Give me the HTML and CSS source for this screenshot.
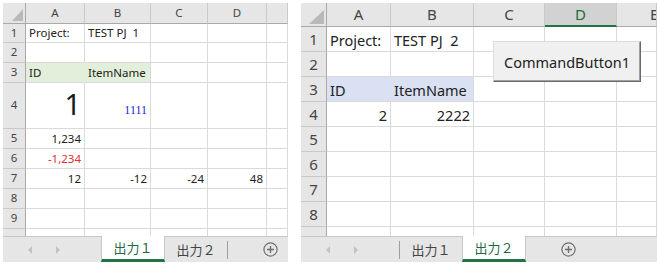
FILE: index.html
```html
<!DOCTYPE html>
<html lang="ja">
<head>
    <meta charset="UTF-8">
    <meta name="viewport" content="width=device-width, initial-scale=1.0">
    <title>Book</title>
    <link rel="stylesheet" href="styles.css">
</head>
<body>
    <div class="book">
        <!-- sheet 出力1 -->
        <div class="pane pane-1">
            <div class="sheet sheet-1">
                <div class="c h corner"><span class="tri"></span></div>
                <div class="c h col-h">A</div>
                <div class="c h col-h">B</div>
                <div class="c h col-h">C</div>
                <div class="c h col-h">D</div>
                <div class="c h col-h"></div>

                <div class="c h row-h">1</div>
                <div class="c">Project:</div>
                <div class="c">TEST PJ&nbsp; 1</div>
                <div class="c"></div><div class="c"></div><div class="c"></div>

                <div class="c h row-h">2</div>
                <div class="c"></div><div class="c"></div><div class="c"></div><div class="c"></div><div class="c"></div>

                <div class="c h row-h">3</div>
                <div class="c fill-green join">ID</div>
                <div class="c fill-green">ItemName</div>
                <div class="c"></div><div class="c"></div><div class="c"></div>

                <div class="c h row-h">4</div>
                <div class="c num big">1</div>
                <div class="c num blue">1111</div>
                <div class="c"></div><div class="c"></div><div class="c"></div>

                <div class="c h row-h">5</div>
                <div class="c num">1,234</div>
                <div class="c"></div><div class="c"></div><div class="c"></div><div class="c"></div>

                <div class="c h row-h">6</div>
                <div class="c num red">-1,234</div>
                <div class="c"></div><div class="c"></div><div class="c"></div><div class="c"></div>

                <div class="c h row-h">7</div>
                <div class="c num">12</div>
                <div class="c num">-12</div>
                <div class="c num">-24</div>
                <div class="c num">48</div>
                <div class="c"></div>

                <div class="c h row-h">8</div>
                <div class="c"></div><div class="c"></div><div class="c"></div><div class="c"></div><div class="c"></div>

                <div class="c h row-h">9</div>
                <div class="c"></div><div class="c"></div><div class="c"></div><div class="c"></div><div class="c"></div>

                <div class="c h row-h cut"></div>
                <div class="c cut"></div><div class="c cut"></div><div class="c cut"></div><div class="c cut"></div><div class="c cut"></div>
            </div>
            <div class="tabs">
                <div class="nav"><span class="arr arr-l"></span><span class="arr arr-r"></span></div>
                <div class="tab active">出力１</div>
                <div class="tab">出力２</div>
                <span class="sep"></span>
                <svg class="plus" width="15" height="15" viewBox="0 0 15 15">
                    <circle cx="7.5" cy="7.5" r="6.6" fill="none" stroke="#6e6e6e" stroke-width="1.2"/>
                    <path d="M7.5 4v7M4 7.5h7" stroke="#6e6e6e" stroke-width="1.4"/>
                </svg>
            </div>
        </div>

        <!-- sheet 出力2 -->
        <div class="pane pane-2">
            <div class="sheet sheet-2">
                <div class="c h corner"><span class="tri"></span></div>
                <div class="c h col-h">A</div>
                <div class="c h col-h">B</div>
                <div class="c h col-h">C</div>
                <div class="c h col-h sel">D</div>
                <div class="c h col-h edge">E</div>

                <div class="c h row-h">1</div>
                <div class="c">Project:</div>
                <div class="c">TEST PJ&nbsp; 2</div>
                <div class="c"></div><div class="c"></div><div class="c"></div>

                <div class="c h row-h">2</div>
                <div class="c"></div><div class="c"></div><div class="c"></div><div class="c"></div><div class="c"></div>

                <div class="c h row-h">3</div>
                <div class="c fill-blue join">ID</div>
                <div class="c fill-blue">ItemName</div>
                <div class="c"></div><div class="c"></div><div class="c"></div>

                <div class="c h row-h">4</div>
                <div class="c num">2</div>
                <div class="c num">2222</div>
                <div class="c"></div><div class="c"></div><div class="c"></div>

                <div class="c h row-h">5</div>
                <div class="c"></div><div class="c"></div><div class="c"></div><div class="c"></div><div class="c"></div>

                <div class="c h row-h">6</div>
                <div class="c"></div><div class="c"></div><div class="c"></div><div class="c"></div><div class="c"></div>

                <div class="c h row-h">7</div>
                <div class="c"></div><div class="c"></div><div class="c"></div><div class="c"></div><div class="c"></div>

                <div class="c h row-h">8</div>
                <div class="c"></div><div class="c"></div><div class="c"></div><div class="c"></div><div class="c"></div>

                <div class="c h row-h cut"></div>
                <div class="c cut"></div><div class="c cut"></div><div class="c cut"></div><div class="c cut"></div><div class="c cut"></div>
            </div>
            <div class="tabs">
                <div class="nav"><span class="arr arr-l"></span><span class="arr arr-r"></span></div>
                <span class="sep"></span>
                <div class="tab">出力１</div>
                <div class="tab active">出力２</div>
                <svg class="plus" width="15" height="15" viewBox="0 0 15 15">
                    <circle cx="7.5" cy="7.5" r="6.6" fill="none" stroke="#6e6e6e" stroke-width="1.2"/>
                    <path d="M7.5 4v7M4 7.5h7" stroke="#6e6e6e" stroke-width="1.4"/>
                </svg>
            </div>

            <button class="cmd">CommandButton1</button>
        </div>
    </div>
</body>
</html>
```

FILE: styles.css
```css
* {
    box-sizing: border-box;
}

body {
    margin: 0;
    font-family: "Noto Sans", "Noto Sans CJK JP", sans-serif;
    background-color: #ffffff;
    color: #222;
}

.book {
    display: flex;
    gap: 13px;
    padding: 3px 0 0 3px;
    height: 266px;
    overflow: hidden;
}

.pane {
    display: flex;
    flex-direction: column;
    overflow: hidden;
    flex: none;
}

.pane-1 {
    width: 285px;
}

.pane-2 {
    width: 356px;
    position: relative;
}

.sheet {
    display: grid;
}

.sheet-1 {
    grid-template-columns: 23px 59px 66px 57px 59px 21px;
    grid-template-rows: 21px 19px 20px 20px 46px repeat(5, 20px) 7px;
    font-size: 11.5px;
}

.sheet-2 {
    grid-template-columns: 26px 64px 83px 71px 72px 40px;
    grid-template-rows: 24px repeat(8, 25px) 9px;
    font-size: 14.5px;
}

/* cells */
.c {
    display: flex;
    align-items: flex-end;
    padding: 0 3px 2px;
    border-right: 1px solid #dadada;
    border-bottom: 1px solid #dadada;
    line-height: 1.1;
    white-space: nowrap;
    overflow: hidden;
}

.num {
    justify-content: flex-end;
    padding-right: 3px;
}

.cut {
    border-bottom: none;
}

.h {
    background-color: #e6e6e6;
    color: #444;
    justify-content: center;
    align-items: center;
    padding: 0;
    border-color: #c9c9c9;
}

.col-h {
    border-bottom-color: #a9a9a9;
}

.row-h {
    border-right-color: #a9a9a9;
}

.sheet-2 .h {
    font-size: 15px;
}

.corner {
    justify-content: flex-end;
    align-items: flex-end;
    padding: 0 2px 2px 0;
    border-right-color: #a9a9a9;
    border-bottom-color: #a9a9a9;
}

.tri {
    display: block;
    width: 11px;
    height: 12px;
    background-color: #b9b9b9;
    clip-path: polygon(100% 0, 100% 100%, 0 100%);
}

.sheet-2 .tri {
    width: 15px;
    height: 14px;
}

.sel {
    background-color: #d2d2d2;
    color: #1e6b41;
    border-bottom: 2px solid #217346;
}

.edge {
    justify-content: flex-start;
    padding-left: 33px;
}

.fill-green {
    background-color: #e2efda;
}

.fill-blue {
    background-color: #d9e1f2;
}

.fill-green.join {
    border-right-color: #e2efda;
}

.fill-blue.join {
    border-right-color: #d9e1f2;
}

.big {
    font-size: 29px;
    line-height: 1;
    padding-bottom: 10px;
    color: #1a1a1a;
}

.blue {
    font-family: "Liberation Serif", serif;
    font-size: 12px;
    color: #2626c9;
    padding-bottom: 11px;
}

.red {
    color: #e0303a;
}

/* tab bar */
.tabs {
    display: flex;
    align-items: center;
    height: 26px;
    background-color: #e6e6e6;
    border-top: 1px solid #c8c8c8;
    font-size: 13px;
    color: #444;
}

.nav {
    flex: none;
    width: 98px;
    display: flex;
    align-items: center;
    gap: 24px;
    padding-left: 25px;
}

.arr {
    width: 0;
    height: 0;
    border-top: 4px solid transparent;
    border-bottom: 4px solid transparent;
}

.arr-l {
    border-right: 4px solid #c2c2c2;
}

.arr-r {
    border-left: 4px solid #c2c2c2;
}

.tab {
    flex: none;
    width: 62px;
    height: 100%;
    display: flex;
    align-items: center;
    justify-content: center;
    padding-bottom: 1px;
}

.tab.active {
    width: 64px;
    height: calc(100% + 1px);
    margin-top: -1px;
    background-color: #ffffff;
    border-left: 1px solid #c8c8c8;
    border-right: 1px solid #c8c8c8;
    border-bottom: 3px solid #217346;
    color: #1e6b41;
    padding-bottom: 0;
}

.sep {
    flex: none;
    width: 1px;
    height: 18px;
    background-color: #9e9e9e;
}

.plus {
    flex: none;
    margin-left: 35px;
}

/* ActiveX button over the grid */
.cmd {
    position: absolute;
    left: 192px;
    top: 38px;
    width: 148px;
    height: 41px;
    background-color: #f0f0f0;
    border: 1px solid #dcdcdc;
    border-right-color: #6a6a6a;
    border-bottom-color: #6a6a6a;
    box-shadow: inset -1px -1px 0 #a0a0a0;
    font-family: "Noto Sans", sans-serif;
    font-size: 14.5px;
    color: #222;
    padding: 0;
}
```
